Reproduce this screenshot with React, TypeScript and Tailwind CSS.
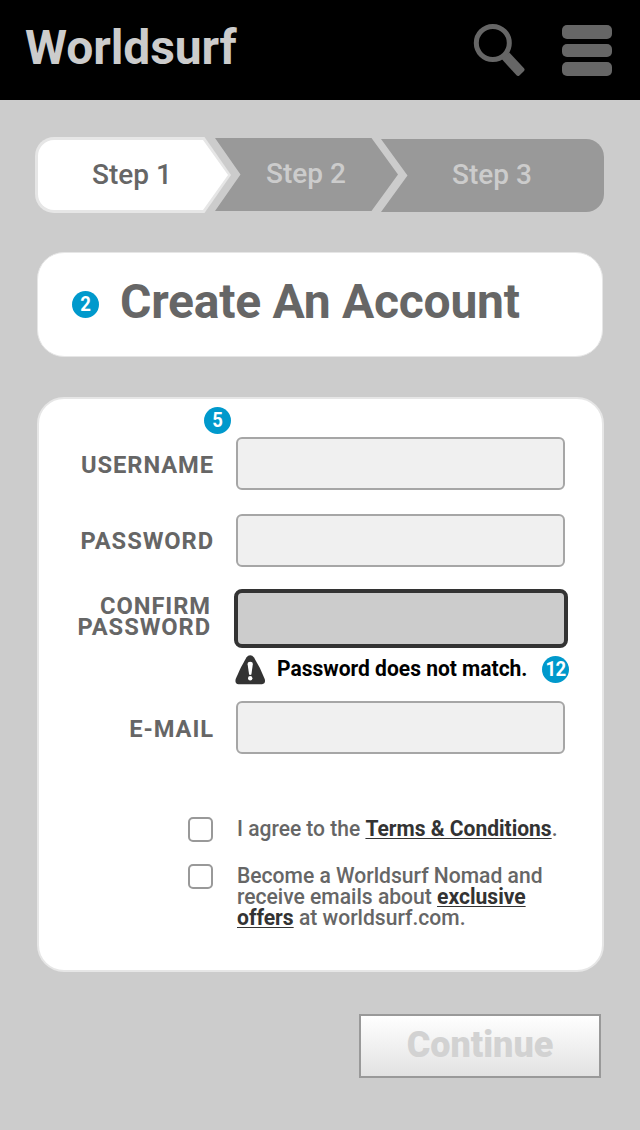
import type { ReactNode } from "react";

function Badge({ children, className }: { children: ReactNode; className: string }) {
  return (
    <span
      className={`flex h-[27px] w-[27px] shrink-0 items-center justify-center rounded-full bg-[#0099cc] text-[19.5px] leading-[27px] font-bold text-white ${className}`}
    >
      <span className="inline-block scale-x-[0.95]">{children}</span>
    </span>
  );
}

function SearchIcon() {
  return (
    <svg className="h-[54px] w-[52px]" viewBox="0 0 52 54" fill="none" aria-hidden="true">
      <circle cx="19.8" cy="20" r="16.5" stroke="#666" strokeWidth="5" />
      <path d="M28.7 36L36.3 29.5L51 45.2Q52.2 46.6 51 48L46.4 52.4Q44.9 53.6 43.5 52.3Z" fill="#666" />
    </svg>
  );
}

function MenuIcon() {
  return (
    <span className="flex w-[50px] flex-col gap-[5px]">
      <span className="h-[13.5px] rounded-[5px] bg-[#666]" />
      <span className="h-[13.5px] rounded-[5px] bg-[#666]" />
      <span className="h-[13.5px] rounded-[5px] bg-[#666]" />
    </span>
  );
}

function WarningIcon() {
  return (
    <svg className="h-[30px] w-[31px]" viewBox="0 0 31 30" aria-hidden="true">
      <path
        d="M11.4 2.4Q13 .2 15.2 .2Q17.4 .2 19 2.4Q25 12 29.7 24Q31 28.7 27 29.2H3.5Q-.5 28.7 .7 24Q5.5 12 11.4 2.4Z"
        fill="#333"
      />
      <path d="M12.6 9.2Q12.6 6.8 15.2 6.8Q17.8 6.8 17.8 9.2L16.4 19.6Q15.2 20.4 14.1 19.6Z" fill="#fff" />
      <circle cx="15.2" cy="23.2" r="2.2" fill="#fff" />
    </svg>
  );
}

const label =
  "w-[175px] origin-right scale-x-[1.03] text-right text-[23px] leading-[54px] font-bold tracking-[0.9px] text-[#666]";
const field = "h-[53px] w-[329px] rounded-[6px] border-2 border-[#a6a6a6] bg-[#f0f0f0] outline-none";
const box = "h-[25px] w-[25px] shrink-0 appearance-none rounded-[5px] border-2 border-[#999] bg-white";
const link = "font-bold text-[#333] underline decoration-1 underline-offset-[2px]";

export default function App() {
  return (
    <div className="h-[1130px] w-[640px] overflow-hidden bg-[#ccc] font-['Roboto',sans-serif]">
      <header className="flex h-[100px] items-start bg-black pr-[28px] pl-[25px]">
        <h1 className="mt-[20px] text-[48px] leading-[56px] font-bold tracking-[-0.1px] text-[#ccc]">Worldsurf</h1>
        <div className="mt-[23px] ml-auto flex gap-[37px]">
          <SearchIcon />
          <div className="pt-[2px]">
            <MenuIcon />
          </div>
        </div>
      </header>

      <nav className="mt-[37px] flex h-[76px] pl-[35px] text-[28px] font-medium">
        <div className="h-[76px] w-[196px] rounded-l-[19px] bg-[#e6e6e6] p-[3px] [clip-path:polygon(0_0,169.5px_0,196px_38px,169.5px_100%,0_100%)]">
          <div className="h-[70px] w-[190px] rounded-l-[16px] bg-white pl-[54px] leading-[69px] text-[#666] [clip-path:polygon(0_0,165px_0,190px_35px,165px_100%,0_100%)]">
            Step 1
          </div>
        </div>
        <div className="mt-px -ml-[16px] h-[73px] w-[183px] bg-[#999] pl-[51px] leading-[71px] text-[#ccc] [clip-path:polygon(0_0,156.5px_0,183px_36.5px,156.5px_100%,0_100%,25.5px_36.5px)]">
          Step 2
        </div>
        <div className="mt-[2px] -ml-[17px] h-[73px] w-[223px] rounded-r-[18px] bg-[#999] pl-[71px] leading-[71px] text-[#ccc] [clip-path:polygon(0_0,100%_0,100%_100%,0_100%,26.5px_36.5px)]">
          Step 3
        </div>
      </nav>

      <main className="px-[37px]">
        <section className="mt-[39px] flex h-[105px] w-[566px] items-start rounded-[27px] border border-[#e6e6e6] bg-white pl-[34px]">
          <Badge className="mt-[38px]">2</Badge>
          <h2 className="mt-[21px] ml-[21px] text-[48px] leading-[56px] font-bold tracking-[-0.25px] whitespace-nowrap text-[#666]">
            Create An Account
          </h2>
        </section>

        <form className="relative mt-[40px] h-[575px] w-[567px] rounded-[27px] border-2 border-[#e6e6e6] bg-white pt-[38px]">
          <Badge className="absolute top-[8px] left-[165px]">5</Badge>
          <div className="flex h-[54px] gap-[22px]">
            <label htmlFor="username" className={`${label} pt-[2px]`}>USERNAME</label>
            <input id="username" className={field} />
          </div>
          <div className="mt-[23px] flex h-[54px] gap-[22px]">
            <label htmlFor="password" className={`${label} pt-px`}>PASSWORD</label>
            <input id="password" type="password" className={field} />
          </div>
          <div className="mt-[21px] flex gap-[23px]">
            <label htmlFor="confirm" className="mt-[7px] w-[172px] origin-right scale-x-[1.03] text-right text-[23px] leading-[21px] font-bold tracking-[0.9px] text-[#666]">
              CONFIRM PASSWORD
            </label>
            <input id="confirm" type="password" className="h-[59px] w-[334px] rounded-[8px] border-4 border-[#333] bg-[#ccc] outline-none" />
          </div>
          <div className="mt-[7px] flex h-[30px] pl-[196px]">
            <WarningIcon />
            <p className="ml-[10.5px] w-[249.5px] origin-left scale-x-[0.955] text-[22px] leading-[28px] font-bold whitespace-nowrap text-black">
              Password does not match.
            </p>
            <Badge className="mt-px ml-[16px] tracking-[-0.8px]">12</Badge>
          </div>
          <div className="mt-[16px] flex h-[54px] gap-[22px]">
            <label htmlFor="email" className={`${label} pt-[2px]`}>E-MAIL</label>
            <input id="email" type="email" className={field} />
          </div>
          <div className="mt-[62px] flex pl-[149px]">
            <input id="terms" type="checkbox" className={box} />
            <label htmlFor="terms" className="ml-[24px] origin-left scale-x-[0.955] text-[22px] leading-[24px] font-medium whitespace-nowrap text-[#666]">
              I agree to the <a className={link}>Terms &amp; Conditions</a>.
            </label>
          </div>
          <div className="mt-[22px] flex pl-[149px]">
            <input id="nomad" type="checkbox" className={box} />
            <label htmlFor="nomad" className="mt-px ml-[24px] origin-left scale-x-[0.958] text-[22px] leading-[21px] font-medium whitespace-nowrap text-[#666]">
              Become a Worldsurf Nomad and
              <br />
              receive emails about <a className={link}>exclusive</a>
              <br />
              <a className={link}>offers</a> at worldsurf.com.
            </label>
          </div>
        </form>

        <button className="mt-[42px] ml-[322px] block h-[64px] w-[242px] border-2 border-[#999] bg-gradient-to-b from-white to-[#e2e2e2] pb-[2px] text-[36px] leading-[58px] font-black text-[#d2d2d2]">
          Continue
        </button>
      </main>
    </div>
  );
}
